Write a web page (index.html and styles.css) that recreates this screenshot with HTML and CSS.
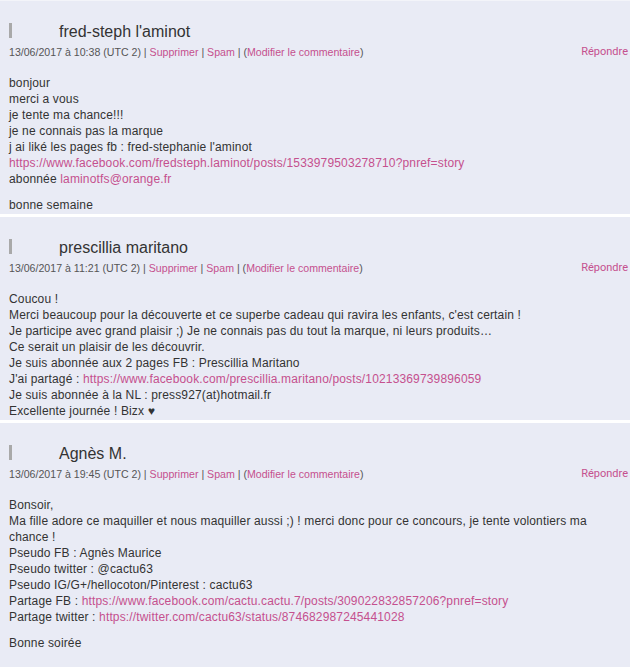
FILE: index.html
```html
<!DOCTYPE html>
<html lang="fr">
<head>
    <meta charset="UTF-8">
    <meta name="viewport" content="width=device-width, initial-scale=1.0">
    <title>Commentaires</title>
    <link rel="stylesheet" href="styles.css">
</head>
<body>
    <div class="comments">
        <div class="comment">
            <div class="comment-head">
                <span class="bar"></span>
                <span class="author">fred-steph l'aminot</span>
            </div>
            <div class="meta">
                <span class="meta-left">13/06/2017 à 10:38 (UTC 2) | <a href="#">Supprimer</a> | <a href="#">Spam</a> | (<a href="#">Modifier le commentaire</a>)</span>
                <a href="#" class="reply">Répondre</a>
            </div>
            <div class="comment-body">
                <p>bonjour<br>
                merci a vous<br>
                je tente ma chance!!!<br>
                je ne connais pas la marque<br>
                j ai liké les pages fb : fred-stephanie l'aminot<br>
                <a href="#">https://www.facebook.com/fredsteph.laminot/posts/1533979503278710?pnref=story</a><br>
                abonnée <a href="#">laminotfs@orange.fr</a></p>
                <p>bonne semaine</p>
            </div>
        </div>

        <div class="comment">
            <div class="comment-head">
                <span class="bar"></span>
                <span class="author">prescillia maritano</span>
            </div>
            <div class="meta">
                <span class="meta-left">13/06/2017 à 11:21 (UTC 2) | <a href="#">Supprimer</a> | <a href="#">Spam</a> | (<a href="#">Modifier le commentaire</a>)</span>
                <a href="#" class="reply">Répondre</a>
            </div>
            <div class="comment-body">
                <p>Coucou !<br>
                Merci beaucoup pour la découverte et ce superbe cadeau qui ravira les enfants, c'est certain !<br>
                Je participe avec grand plaisir ;) Je ne connais pas du tout la marque, ni leurs produits…<br>
                Ce serait un plaisir de les découvrir.<br>
                Je suis abonnée aux 2 pages FB : Prescillia Maritano<br>
                J'ai partagé : <a href="#">https://www.facebook.com/prescillia.maritano/posts/10213369739896059</a><br>
                Je suis abonnée à la NL : press927(at)hotmail.fr<br>
                Excellente journée ! Bizx ♥</p>
            </div>
        </div>

        <div class="comment">
            <div class="comment-head">
                <span class="bar"></span>
                <span class="author">Agnès M.</span>
            </div>
            <div class="meta">
                <span class="meta-left">13/06/2017 à 19:45 (UTC 2) | <a href="#">Supprimer</a> | <a href="#">Spam</a> | (<a href="#">Modifier le commentaire</a>)</span>
                <a href="#" class="reply">Répondre</a>
            </div>
            <div class="comment-body">
                <p>Bonsoir,<br>
                Ma fille adore ce maquiller et nous maquiller aussi ;) ! merci donc pour ce concours, je tente volontiers ma chance !<br>
                Pseudo FB : Agnès Maurice<br>
                Pseudo twitter : @cactu63<br>
                Pseudo IG/G+/hellocoton/Pinterest : cactu63<br>
                Partage FB : <a href="#">https://www.facebook.com/cactu.cactu.7/posts/309022832857206?pnref=story</a><br>
                Partage twitter : <a href="#">https://twitter.com/cactu63/status/874682987245441028</a></p>
                <p>Bonne soirée</p>
            </div>
        </div>
    </div>
</body>
</html>
```

FILE: styles.css
```css
body {
    margin: 0;
    background-color: #e9ebf5;
    color: #333;
    font-family: "Liberation Sans", Arial, sans-serif;
}

a {
    color: #c5508e;
    text-decoration: none;
}

.comments {
    border-top: 1px solid #f3f4f9;
}

.comment {
    padding: 19px 2px 1px 9px;
    border-bottom: 3px solid #fff;
}

.comment:last-child {
    border-bottom: none;
    padding-bottom: 30px;
}

.comment-head {
    display: flex;
    align-items: center;
    height: 20px;
}

.bar {
    width: 3px;
    height: 15px;
    background-color: #a9a9a9;
}

.author {
    margin-left: 47px;
    margin-top: 3px; /* name sits a little lower than the bar */
    font-size: 16px;
    line-height: 20px;
    color: #333;
}

.meta {
    display: flex;
    justify-content: space-between;
    margin-top: 4px;
    font-size: 10.6px;
    line-height: 16px;
    color: #555;
}

.reply {
    font-family: Roboto, "Liberation Sans", sans-serif;
    font-size: 11px;
}

.comment-body {
    margin-top: 15px;
    padding-right: 8px;
    font-size: 12px;
    letter-spacing: 0.15px;
    line-height: 16px;
}

.comment-body p {
    margin: 0 0 10px;
}

.comment-body p:last-child {
    margin-bottom: 0;
}
```
